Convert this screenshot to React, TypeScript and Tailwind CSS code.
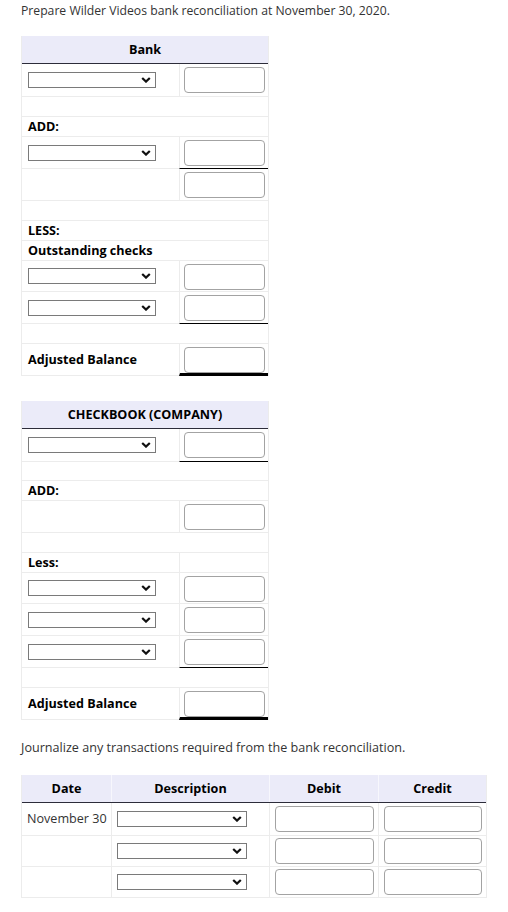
type Row = {
  t: "si" | "i" | "e" | "l" | "ls" | "a";
  text?: string;
  line?: 1 | 2;
  h?: string;
};

const bankRows: Row[] = [
  { t: "si", h: "h-[33px]" },
  { t: "e" },
  { t: "l", text: "ADD:" },
  { t: "si", line: 1 },
  { t: "i" },
  { t: "e" },
  { t: "l", text: "LESS:" },
  { t: "l", text: "Outstanding checks" },
  { t: "si", h: "h-[31px]" },
  { t: "si", line: 1 },
  { t: "e" },
  { t: "a", text: "Adjusted Balance", line: 2 },
];

const bookRows: Row[] = [
  { t: "si", line: 1, h: "h-[33px]" },
  { t: "e", h: "h-[19px]" },
  { t: "l", text: "ADD:" },
  { t: "i" },
  { t: "e" },
  { t: "ls", text: "Less:" },
  { t: "si", h: "h-[31px]" },
  { t: "si" },
  { t: "si", line: 1 },
  { t: "e" },
  { t: "a", text: "Adjusted Balance", line: 2 },
];

const Chevron = () => (
  <svg width="10" height="6" viewBox="0 0 10 6">
    <path d="M1.2 1 L5 4.6 L8.8 1" fill="none" stroke="#111" strokeWidth="2.2" />
  </svg>
);

const Select = ({ w = "w-[128px]" }: { w?: string }) => (
  <div className={`${w} h-[16px] border border-[#7a7a7a] bg-white flex items-center justify-end pr-[4px]`}>
    <Chevron />
  </div>
);

const Amount = ({ w = "w-[81px]" }: { w?: string }) => (
  <div className={`${w} h-[26px] border border-[#a3a3a3] rounded-[4px] bg-white`} />
);

const RecRow = ({ row }: { row: Row }) => {
  if (row.t === "e") return <div className={`${row.h ?? "h-[20px]"} border-b border-[#ececec]`} />;
  if (row.t === "l")
    return (
      <div className="h-[20px] border-b border-[#ececec] flex items-center pl-[6px] font-bold text-black">
        {row.text}
      </div>
    );

  const rightBorder =
    row.line === 2
      ? "border-b-[3px] border-black"
      : row.line === 1
        ? "border-b border-black"
        : "border-b border-[#ececec]";
  const h = row.h ?? (row.t === "ls" ? "h-[20px]" : "h-[32px]");

  return (
    <div className={`flex ${h}`}>
      <div className="w-[157px] border-b border-[#ececec] flex items-center pl-[6px] font-bold text-black">
        {row.t === "si" && <Select />}
        {(row.t === "ls" || row.t === "a") && row.text}
      </div>
      <div className={`flex-1 border-l border-l-[#ececec] ${rightBorder} flex items-start pt-[3px] pl-[4px]`}>
        {row.t !== "ls" && <Amount />}
      </div>
    </div>
  );
};

const RecTable = ({ title, rows }: { title: string; rows: Row[] }) => (
  <div className="w-[248px] border-x border-[#ececec]">
    <div className="h-[28px] bg-[#ebebf9] border-b border-[#2c2c3a] flex items-center justify-center font-bold text-black">
      {title}
    </div>
    {rows.map((r, i) => (
      <RecRow key={i} row={r} />
    ))}
  </div>
);

const JournalRow = ({ date, h }: { date?: string; h: string }) => (
  <div className={`flex ${h} border-b border-[#ececec]`}>
    <div className="w-[89px] flex items-center pl-[5px] text-[#333]">{date}</div>
    <div className="w-[158px] border-l border-[#ececec] flex items-center pl-[5px]">
      <Select w="w-[130px]" />
    </div>
    <div className="w-[109px] border-l border-[#ececec] flex items-center pl-[5px]">
      <Amount w="w-[99px]" />
    </div>
    <div className="flex-1 border-l border-[#ececec] flex items-center pl-[5px]">
      <Amount w="w-[98px]" />
    </div>
  </div>
);

export default function App() {
  return (
    <div className="min-h-[912px] w-[508px] bg-white pl-[21px] pt-[3px] font-['Open_Sans',sans-serif] text-[12.6px] leading-[16px]">
      <p className="text-[#333] text-[12.2px]">Prepare Wilder Videos bank reconciliation at November 30, 2020.</p>

      <div className="mt-[17px]">
        <RecTable title="Bank" rows={bankRows} />
      </div>

      <div className="mt-[25px]">
        <RecTable title="CHECKBOOK (COMPANY)" rows={bookRows} />
      </div>

      <p className="mt-[20px] text-[#333]">Journalize any transactions required from the bank reconciliation.</p>

      <div className="mt-[19px] w-[466px] border-x border-[#ececec]">
        <div className="flex h-[28px] bg-[#ebebf9] border-b border-[#2c2c3a] font-bold text-black">
          <div className="w-[89px] flex items-center justify-center">Date</div>
          <div className="w-[158px] border-l border-[#f7f7fd] flex items-center justify-center">Description</div>
          <div className="w-[109px] border-l border-[#f7f7fd] flex items-center justify-center">Debit</div>
          <div className="flex-1 border-l border-[#f7f7fd] flex items-center justify-center">Credit</div>
        </div>
        <JournalRow date="November 30" h="h-[33px]" />
        <JournalRow h="h-[31px]" />
        <JournalRow h="h-[31px]" />
      </div>
    </div>
  );
}
